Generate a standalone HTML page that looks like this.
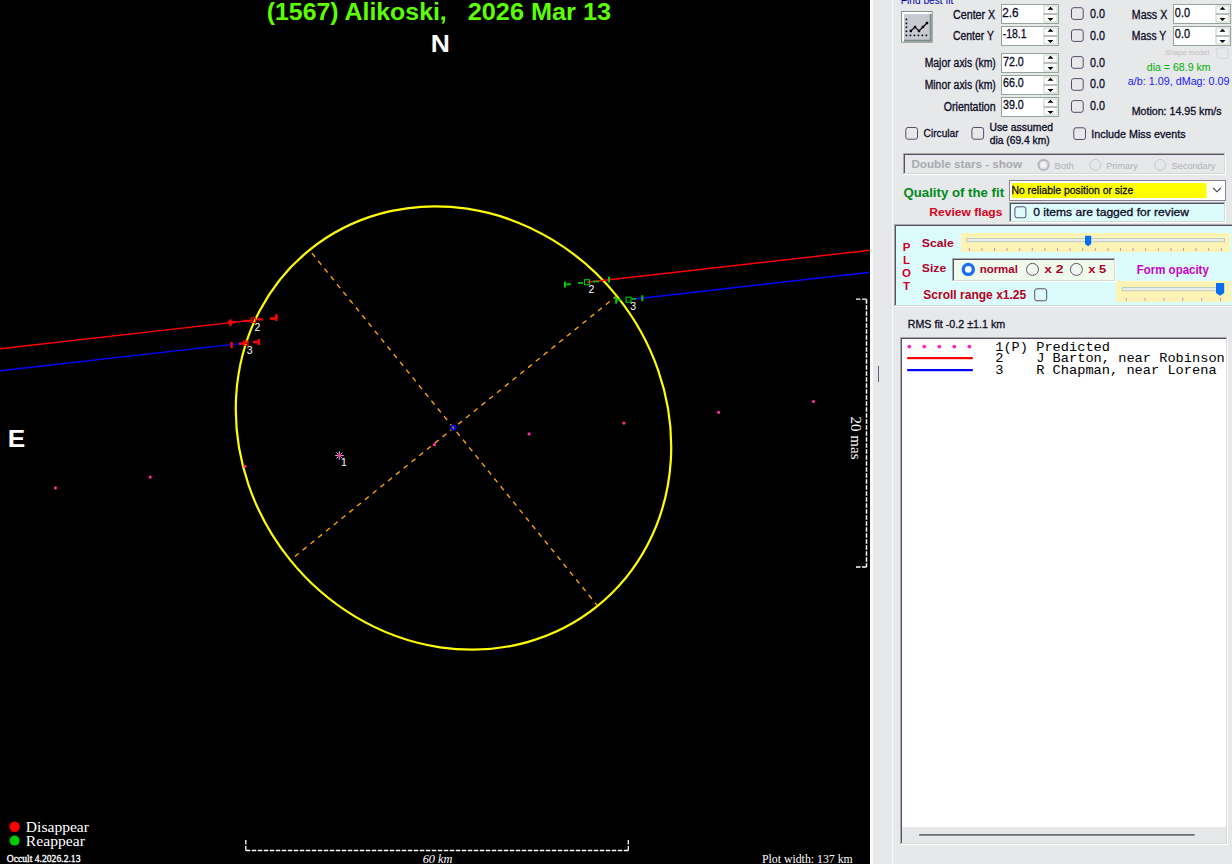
<!DOCTYPE html><html><head><meta charset="utf-8"><style>html,body{margin:0;padding:0;background:#000;overflow:hidden}svg{display:block}</style></head><body>
<svg width="1232" height="864" viewBox="0 0 1232 864">
<rect x="0" y="0" width="870" height="864" fill="#000"/>
<ellipse cx="453.5" cy="428" rx="229" ry="210" transform="rotate(51 453.5 428)" fill="none" stroke="#ffff00" stroke-width="2.2"/>
<line x1="309.6" y1="250.3" x2="597.4" y2="605.7" stroke="#ffa500" stroke-width="1.35" stroke-dasharray="5 5" stroke-dashoffset="6.4"/>
<line x1="291.1" y1="559.5" x2="615.9" y2="296.5" stroke="#ffa500" stroke-width="1.35" stroke-dasharray="5 5" stroke-dashoffset="5.1"/>
<circle cx="453.5" cy="427.5" r="2.2" fill="none" stroke="#0000ff" stroke-width="1.8"/>
<line x1="0" y1="348.80" x2="253" y2="320.14" stroke="#ff0000" stroke-width="1.45"/>
<line x1="587" y1="282.29" x2="870" y2="250.23" stroke="#ff0000" stroke-width="1.45"/>
<line x1="0" y1="370.80" x2="240" y2="343.63" stroke="#0000ff" stroke-width="1.45"/>
<line x1="239" y1="343.75" x2="247" y2="342.84" stroke="#ff0000" stroke-width="2.5"/>
<line x1="635" y1="298.92" x2="870" y2="272.32" stroke="#0000ff" stroke-width="1.45"/>
<rect x="229.2" y="319.4" width="2.5" height="6.5" fill="#ff0000"/>
<line x1="228" y1="322.20" x2="236" y2="322.20" stroke="#ff0000" stroke-width="2.2"/>
<line x1="243" y1="320.80" x2="251" y2="320.80" stroke="#ff0000" stroke-width="2"/>
<rect x="251.2" y="317.9" width="4.5" height="4.5" fill="none" stroke="#ff0000" stroke-width="1.1"/>
<line x1="257" y1="319.40" x2="263" y2="319.40" stroke="#ff0000" stroke-width="2.2"/>
<line x1="270" y1="318.50" x2="277" y2="318.50" stroke="#ff0000" stroke-width="2.5"/>
<rect x="275.1" y="314.1" width="2.5" height="6.8" fill="#ff0000"/>
<rect x="230.3" y="342.0" width="2.5" height="6" fill="#ff0000"/>
<rect x="243.6" y="340.9" width="4.5" height="4.5" fill="none" stroke="#ff0000" stroke-width="1.1"/>
<line x1="253" y1="342.00" x2="260" y2="342.00" stroke="#ff0000" stroke-width="2.5"/>
<rect x="257.6" y="339.0" width="2.5" height="6" fill="#ff0000"/>
<rect x="564.0" y="281.6" width="2" height="6" fill="#00cc00"/>
<line x1="565" y1="284.30" x2="571" y2="284.30" stroke="#00cc00" stroke-width="1.8"/>
<line x1="578" y1="283.00" x2="583" y2="283.00" stroke="#00cc00" stroke-width="1.8"/>
<rect x="584.6" y="279.7" width="5" height="5" fill="none" stroke="#00cc00" stroke-width="1.1"/>
<line x1="593" y1="281.50" x2="599" y2="281.50" stroke="#00cc00" stroke-width="1.6"/>
<rect x="608.0" y="276.7" width="2" height="5.8" fill="#00cc00"/>
<rect x="615.2" y="296.7" width="2" height="7" fill="#00cc00"/>
<line x1="616" y1="299.60" x2="621" y2="299.60" stroke="#00cc00" stroke-width="1.8"/>
<rect x="626.1" y="297.2" width="5" height="5" fill="none" stroke="#00cc00" stroke-width="1.1"/>
<line x1="632" y1="299.00" x2="636" y2="299.00" stroke="#00cc00" stroke-width="1.6"/>
<rect x="641.3" y="295.3" width="2" height="5.8" fill="#00cc00"/>
<text x="254.50" y="331" font-family="Liberation Sans" font-size="10.5" fill="#fff" font-weight="normal" font-style="normal" text-anchor="start"  xml:space="preserve">2</text>
<text x="246.80" y="353.6" font-family="Liberation Sans" font-size="10.5" fill="#fff" font-weight="normal" font-style="normal" text-anchor="start"  xml:space="preserve">3</text>
<text x="588.50" y="293" font-family="Liberation Sans" font-size="10.5" fill="#fff" font-weight="normal" font-style="normal" text-anchor="start"  xml:space="preserve">2</text>
<text x="630.30" y="309.6" font-family="Liberation Sans" font-size="10.5" fill="#fff" font-weight="normal" font-style="normal" text-anchor="start"  xml:space="preserve">3</text>
<text x="341.00" y="465.7" font-family="Liberation Sans" font-size="10.5" fill="#fff" font-weight="normal" font-style="normal" text-anchor="start"  xml:space="preserve">1</text>
<circle cx="55.4" cy="487.9" r="1.6" fill="#ff2a9a"/>
<circle cx="150.2" cy="477.1" r="1.6" fill="#ff2a9a"/>
<circle cx="244.9" cy="466.3" r="1.6" fill="#ff2a9a"/>
<circle cx="434.4" cy="444.7" r="1.6" fill="#ff2a9a"/>
<circle cx="529.1" cy="433.9" r="1.6" fill="#ff2a9a"/>
<circle cx="623.9" cy="423.1" r="1.6" fill="#ff2a9a"/>
<circle cx="718.6" cy="412.3" r="1.6" fill="#ff2a9a"/>
<circle cx="813.4" cy="401.5" r="1.6" fill="#ff2a9a"/>
<line x1="335.2" y1="455.5" x2="343.6" y2="455.5" stroke="#d8d8ff" stroke-width="0.9"/>
<line x1="336.4" y1="452.5" x2="342.4" y2="458.5" stroke="#d8d8ff" stroke-width="0.9"/>
<line x1="339.4" y1="451.3" x2="339.4" y2="459.7" stroke="#d8d8ff" stroke-width="0.9"/>
<line x1="342.4" y1="452.5" x2="336.4" y2="458.5" stroke="#d8d8ff" stroke-width="0.9"/>
<circle cx="339.4" cy="455.5" r="1.9" fill="#ff2a9a"/>
<text x="266.71" y="19.7" font-family="Liberation Sans" font-size="24" fill="#5cff00" font-weight="bold" font-style="normal" text-anchor="start" textLength="180.06" lengthAdjust="spacingAndGlyphs"  xml:space="preserve">(1567) Alikoski,</text>
<text x="467.71" y="19.7" font-family="Liberation Sans" font-size="24" fill="#5cff00" font-weight="bold" font-style="normal" text-anchor="start" textLength="143.40" lengthAdjust="spacingAndGlyphs"  xml:space="preserve">2026 Mar 13</text>
<text x="430.65" y="52" font-family="Liberation Sans" font-size="24" fill="#fff" font-weight="bold" font-style="normal" text-anchor="start" textLength="19.11" lengthAdjust="spacingAndGlyphs"  xml:space="preserve">N</text>
<text x="7.67" y="446.9" font-family="Liberation Sans" font-size="24" fill="#fff" font-weight="bold" font-style="normal" text-anchor="start" textLength="17.44" lengthAdjust="spacingAndGlyphs"  xml:space="preserve">E</text>
<circle cx="14.6" cy="826.8" r="5.2" fill="#ff0000"/>
<circle cx="14.6" cy="840.6" r="5.0" fill="#00cc00"/>
<text x="25.88" y="832" font-family="Liberation Serif" font-size="15" fill="#fff" font-weight="normal" font-style="normal" text-anchor="start" textLength="63.08" lengthAdjust="spacingAndGlyphs"  xml:space="preserve">Disappear</text>
<text x="25.88" y="845.8" font-family="Liberation Serif" font-size="15" fill="#fff" font-weight="normal" font-style="normal" text-anchor="start" textLength="59.07" lengthAdjust="spacingAndGlyphs"  xml:space="preserve">Reappear</text>
<text x="6.84" y="861.7" font-family="Liberation Serif" font-size="10.5" fill="#fff" font-weight="normal" font-style="normal" text-anchor="start" textLength="73.61" lengthAdjust="spacingAndGlyphs" stroke="#fff" stroke-width="0.35" xml:space="preserve">Occult 4.2026.2.13</text>
<path d="M245.8 850.5 H628.3" fill="none" stroke="#fff" stroke-width="1.5" stroke-dasharray="4.5 1.5"/>
<path d="M245.8 840 V850.5 M628.3 840 V850.5" fill="none" stroke="#fff" stroke-width="1.3" stroke-dasharray="4.5 1.5"/>
<text x="422.69" y="863.3" font-family="Liberation Serif" font-size="12" fill="#fff" font-weight="normal" font-style="italic" text-anchor="start" textLength="29.83" lengthAdjust="spacingAndGlyphs"  xml:space="preserve">60 km</text>
<text x="761.95" y="863.3" font-family="Liberation Serif" font-size="12" fill="#fff" font-weight="normal" font-style="normal" text-anchor="start" textLength="90.84" lengthAdjust="spacingAndGlyphs"  xml:space="preserve">Plot width: 137 km</text>
<path d="M866.5 299.2 V567" fill="none" stroke="#fff" stroke-width="1.5" stroke-dasharray="4.5 1.5"/>
<path d="M856 299.2 H866.5 M856 567 H866.5" fill="none" stroke="#fff" stroke-width="1.3" stroke-dasharray="4.5 1.5"/>
<g transform="translate(851 416.6) rotate(90)">
<text x="0.00" y="0" font-family="Liberation Serif" font-size="15" fill="#fff" font-weight="normal" font-style="normal" text-anchor="start"  xml:space="preserve">20 mas</text>
</g>
<rect x="870" y="0" width="362" height="864" fill="#e6e8ea"/>
<rect x="870" y="0" width="3" height="864" fill="#fafafa"/>
<rect x="892" y="0" width="1" height="864" fill="#f8f8f8"/>
<rect x="878" y="366" width="1" height="16" fill="#606070"/>
<text x="900.81" y="3.6" font-family="Liberation Sans" font-size="11.5" fill="#0000b0" font-weight="normal" font-style="normal" text-anchor="start" textLength="52.64" lengthAdjust="spacingAndGlyphs"  xml:space="preserve">Find best fit</text>
<rect x="901" y="11" width="31.7" height="31.7" fill="#8a948e"/>
<rect x="902" y="12" width="29.7" height="29.7" fill="#ffffff"/>
<rect x="904" y="14" width="27.7" height="27.7" fill="#7a8a82"/>
<rect x="904" y="14" width="25.7" height="25.7" fill="#c9c9d2"/>
<rect x="905.6" y="18.599999999999998" width="1.6" height="1.6" fill="#000"/>
<rect x="905.6" y="22.599999999999998" width="1.6" height="1.6" fill="#000"/>
<rect x="905.6" y="26.5" width="1.6" height="1.6" fill="#000"/>
<rect x="905.6" y="30.5" width="1.6" height="1.6" fill="#000"/>
<rect x="905.6" y="34.6" width="1.6" height="1.6" fill="#000"/>
<rect x="909.6" y="34.6" width="1.6" height="1.6" fill="#000"/>
<rect x="913.6" y="34.6" width="1.6" height="1.6" fill="#000"/>
<rect x="917.6" y="34.6" width="1.6" height="1.6" fill="#000"/>
<rect x="921.6" y="34.6" width="1.6" height="1.6" fill="#000"/>
<rect x="925.6" y="34.6" width="1.6" height="1.6" fill="#000"/>
<polyline points="910.8,31 915,27 919,31 923,27 927,23" fill="none" stroke="#000" stroke-width="1.1"/>
<rect x="909.5999999999999" y="29.8" width="2.4" height="2.4" fill="#000"/>
<rect x="913.8" y="25.8" width="2.4" height="2.4" fill="#000"/>
<rect x="917.8" y="29.8" width="2.4" height="2.4" fill="#000"/>
<rect x="921.8" y="25.8" width="2.4" height="2.4" fill="#000"/>
<rect x="925.8" y="21.8" width="2.4" height="2.4" fill="#000"/>
<rect x="1001.5" y="4.5" width="57" height="19" fill="#fff" stroke="#96a49a" stroke-width="1"/>
<rect x="1044.0" y="6.0" width="13" height="7.5" fill="#fdfdfd" stroke="#c6d2c6" stroke-width="1"/>
<rect x="1044.0" y="14.5" width="13" height="7.5" fill="#fdfdfd" stroke="#c6d2c6" stroke-width="1"/>
<rect x="1043.5" y="13.5" width="14" height="1" fill="#b0a8bc"/>
<path d="M1047.5 9.8 L1053.5 9.8 L1050.5 6.7 Z" fill="#000"/>
<path d="M1047.5 17.9 L1053.5 17.9 L1050.5 21.1 Z" fill="#000"/>
<text x="1002.21" y="17" font-family="Liberation Sans" font-size="12" fill="#0a0a24" font-weight="normal" font-style="normal" text-anchor="start" textLength="16.32" lengthAdjust="spacingAndGlyphs"  stroke="#0a0a24" stroke-width="0.3" xml:space="preserve">2.6</text>
<text x="953.05" y="18.6" font-family="Liberation Sans" font-size="12" fill="#0a0a24" font-weight="normal" font-style="normal" text-anchor="start" textLength="42.17" lengthAdjust="spacingAndGlyphs"  stroke="#0a0a24" stroke-width="0.3" xml:space="preserve">Center X</text>
<rect x="1071.5" y="7.7" width="11.7" height="11.7" rx="2.2" fill="none" stroke="#5a4a6a" stroke-width="1"/>
<text x="1089.95" y="17.9" font-family="Liberation Sans" font-size="12" fill="#0a0a24" font-weight="normal" font-style="normal" text-anchor="start" textLength="14.94" lengthAdjust="spacingAndGlyphs"  stroke="#0a0a24" stroke-width="0.3" xml:space="preserve">0.0</text>
<rect x="1001.5" y="26.5" width="57" height="19" fill="#fff" stroke="#96a49a" stroke-width="1"/>
<rect x="1044.0" y="28.0" width="13" height="7.5" fill="#fdfdfd" stroke="#c6d2c6" stroke-width="1"/>
<rect x="1044.0" y="36.5" width="13" height="7.5" fill="#fdfdfd" stroke="#c6d2c6" stroke-width="1"/>
<rect x="1043.5" y="35.5" width="14" height="1" fill="#b0a8bc"/>
<path d="M1047.5 31.8 L1053.5 31.8 L1050.5 28.7 Z" fill="#000"/>
<path d="M1047.5 39.9 L1053.5 39.9 L1050.5 43.1 Z" fill="#000"/>
<text x="1002.77" y="38" font-family="Liberation Sans" font-size="12" fill="#0a0a24" font-weight="normal" font-style="normal" text-anchor="start" textLength="23.66" lengthAdjust="spacingAndGlyphs"  stroke="#0a0a24" stroke-width="0.3" xml:space="preserve">-18.1</text>
<text x="953.07" y="40" font-family="Liberation Sans" font-size="12" fill="#0a0a24" font-weight="normal" font-style="normal" text-anchor="start" textLength="40.77" lengthAdjust="spacingAndGlyphs"  stroke="#0a0a24" stroke-width="0.3" xml:space="preserve">Center Y</text>
<rect x="1071.5" y="29.7" width="11.7" height="11.7" rx="2.2" fill="none" stroke="#5a4a6a" stroke-width="1"/>
<text x="1089.95" y="39.7" font-family="Liberation Sans" font-size="12" fill="#0a0a24" font-weight="normal" font-style="normal" text-anchor="start" textLength="14.94" lengthAdjust="spacingAndGlyphs"  stroke="#0a0a24" stroke-width="0.3" xml:space="preserve">0.0</text>
<rect x="1001.5" y="53.5" width="57" height="19" fill="#fff" stroke="#96a49a" stroke-width="1"/>
<rect x="1044.0" y="55.0" width="13" height="7.5" fill="#fdfdfd" stroke="#c6d2c6" stroke-width="1"/>
<rect x="1044.0" y="63.5" width="13" height="7.5" fill="#fdfdfd" stroke="#c6d2c6" stroke-width="1"/>
<rect x="1043.5" y="62.5" width="14" height="1" fill="#b0a8bc"/>
<path d="M1047.5 58.8 L1053.5 58.8 L1050.5 55.7 Z" fill="#000"/>
<path d="M1047.5 66.9 L1053.5 66.9 L1050.5 70.1 Z" fill="#000"/>
<text x="1003.06" y="65.7" font-family="Liberation Sans" font-size="12" fill="#0a0a24" font-weight="normal" font-style="normal" text-anchor="start" textLength="20.76" lengthAdjust="spacingAndGlyphs"  stroke="#0a0a24" stroke-width="0.3" xml:space="preserve">72.0</text>
<text x="924.63" y="67.1" font-family="Liberation Sans" font-size="12" fill="#0a0a24" font-weight="normal" font-style="normal" text-anchor="start" textLength="71.23" lengthAdjust="spacingAndGlyphs"  stroke="#0a0a24" stroke-width="0.3" xml:space="preserve">Major axis (km)</text>
<rect x="1071.5" y="56.6" width="11.7" height="11.7" rx="2.2" fill="none" stroke="#5a4a6a" stroke-width="1"/>
<text x="1089.95" y="66.6" font-family="Liberation Sans" font-size="12" fill="#0a0a24" font-weight="normal" font-style="normal" text-anchor="start" textLength="14.94" lengthAdjust="spacingAndGlyphs"  stroke="#0a0a24" stroke-width="0.3" xml:space="preserve">0.0</text>
<rect x="1001.5" y="75.5" width="57" height="19" fill="#fff" stroke="#96a49a" stroke-width="1"/>
<rect x="1044.0" y="77.0" width="13" height="7.5" fill="#fdfdfd" stroke="#c6d2c6" stroke-width="1"/>
<rect x="1044.0" y="85.5" width="13" height="7.5" fill="#fdfdfd" stroke="#c6d2c6" stroke-width="1"/>
<rect x="1043.5" y="84.5" width="14" height="1" fill="#b0a8bc"/>
<path d="M1047.5 80.8 L1053.5 80.8 L1050.5 77.7 Z" fill="#000"/>
<path d="M1047.5 88.9 L1053.5 88.9 L1050.5 92.1 Z" fill="#000"/>
<text x="1003.06" y="87.1" font-family="Liberation Sans" font-size="12" fill="#0a0a24" font-weight="normal" font-style="normal" text-anchor="start" textLength="20.76" lengthAdjust="spacingAndGlyphs"  stroke="#0a0a24" stroke-width="0.3" xml:space="preserve">66.0</text>
<text x="924.63" y="89.2" font-family="Liberation Sans" font-size="12" fill="#0a0a24" font-weight="normal" font-style="normal" text-anchor="start" textLength="71.23" lengthAdjust="spacingAndGlyphs"  stroke="#0a0a24" stroke-width="0.3" xml:space="preserve">Minor axis (km)</text>
<rect x="1071.5" y="78.6" width="11.7" height="11.7" rx="2.2" fill="none" stroke="#5a4a6a" stroke-width="1"/>
<text x="1089.95" y="88.3" font-family="Liberation Sans" font-size="12" fill="#0a0a24" font-weight="normal" font-style="normal" text-anchor="start" textLength="14.94" lengthAdjust="spacingAndGlyphs"  stroke="#0a0a24" stroke-width="0.3" xml:space="preserve">0.0</text>
<rect x="1001.5" y="97.5" width="57" height="19" fill="#fff" stroke="#96a49a" stroke-width="1"/>
<rect x="1044.0" y="99.0" width="13" height="7.5" fill="#fdfdfd" stroke="#c6d2c6" stroke-width="1"/>
<rect x="1044.0" y="107.5" width="13" height="7.5" fill="#fdfdfd" stroke="#c6d2c6" stroke-width="1"/>
<rect x="1043.5" y="106.5" width="14" height="1" fill="#b0a8bc"/>
<path d="M1047.5 102.8 L1053.5 102.8 L1050.5 99.7 Z" fill="#000"/>
<path d="M1047.5 110.9 L1053.5 110.9 L1050.5 114.1 Z" fill="#000"/>
<text x="1003.06" y="109.2" font-family="Liberation Sans" font-size="12" fill="#0a0a24" font-weight="normal" font-style="normal" text-anchor="start" textLength="20.76" lengthAdjust="spacingAndGlyphs"  stroke="#0a0a24" stroke-width="0.3" xml:space="preserve">39.0</text>
<text x="943.76" y="110.5" font-family="Liberation Sans" font-size="12" fill="#0a0a24" font-weight="normal" font-style="normal" text-anchor="start" textLength="51.86" lengthAdjust="spacingAndGlyphs"  stroke="#0a0a24" stroke-width="0.3" xml:space="preserve">Orientation</text>
<rect x="1071.5" y="100.6" width="11.7" height="11.7" rx="2.2" fill="none" stroke="#5a4a6a" stroke-width="1"/>
<text x="1089.95" y="110.3" font-family="Liberation Sans" font-size="12" fill="#0a0a24" font-weight="normal" font-style="normal" text-anchor="start" textLength="14.94" lengthAdjust="spacingAndGlyphs"  stroke="#0a0a24" stroke-width="0.3" xml:space="preserve">0.0</text>
<text x="1131.81" y="18.7" font-family="Liberation Sans" font-size="12" fill="#0a0a24" font-weight="normal" font-style="normal" text-anchor="start" textLength="35.42" lengthAdjust="spacingAndGlyphs"  stroke="#0a0a24" stroke-width="0.3" xml:space="preserve">Mass X</text>
<text x="1131.84" y="39.7" font-family="Liberation Sans" font-size="12" fill="#0a0a24" font-weight="normal" font-style="normal" text-anchor="start" textLength="34.42" lengthAdjust="spacingAndGlyphs"  stroke="#0a0a24" stroke-width="0.3" xml:space="preserve">Mass Y</text>
<rect x="1173.5" y="4.5" width="57" height="19" fill="#fff" stroke="#96a49a" stroke-width="1"/>
<rect x="1216.0" y="6.0" width="13" height="7.5" fill="#fdfdfd" stroke="#c6d2c6" stroke-width="1"/>
<rect x="1216.0" y="14.5" width="13" height="7.5" fill="#fdfdfd" stroke="#c6d2c6" stroke-width="1"/>
<rect x="1215.5" y="13.5" width="14" height="1" fill="#b0a8bc"/>
<path d="M1219.5 9.8 L1225.5 9.8 L1222.5 6.7 Z" fill="#000"/>
<path d="M1219.5 17.9 L1225.5 17.9 L1222.5 21.1 Z" fill="#000"/>
<text x="1174.85" y="16.6" font-family="Liberation Sans" font-size="12" fill="#0a0a24" font-weight="normal" font-style="normal" text-anchor="start" textLength="15.15" lengthAdjust="spacingAndGlyphs"  stroke="#0a0a24" stroke-width="0.3" xml:space="preserve">0.0</text>
<rect x="1173.5" y="26.5" width="57" height="19" fill="#fff" stroke="#96a49a" stroke-width="1"/>
<rect x="1216.0" y="28.0" width="13" height="7.5" fill="#fdfdfd" stroke="#c6d2c6" stroke-width="1"/>
<rect x="1216.0" y="36.5" width="13" height="7.5" fill="#fdfdfd" stroke="#c6d2c6" stroke-width="1"/>
<rect x="1215.5" y="35.5" width="14" height="1" fill="#b0a8bc"/>
<path d="M1219.5 31.8 L1225.5 31.8 L1222.5 28.7 Z" fill="#000"/>
<path d="M1219.5 39.9 L1225.5 39.9 L1222.5 43.1 Z" fill="#000"/>
<text x="1174.85" y="38.4" font-family="Liberation Sans" font-size="12" fill="#0a0a24" font-weight="normal" font-style="normal" text-anchor="start" textLength="15.15" lengthAdjust="spacingAndGlyphs"  stroke="#0a0a24" stroke-width="0.3" xml:space="preserve">0.0</text>
<text x="1164.93" y="54.8" font-family="Liberation Sans" font-size="8" fill="#c8bcbc" font-weight="normal" font-style="normal" text-anchor="start" textLength="44.15" lengthAdjust="spacingAndGlyphs"  xml:space="preserve">Shape model</text>
<rect x="1216.8" y="47.8" width="11.4" height="10.5" rx="2" fill="none" stroke="#d4d4dc" stroke-width="1"/>
<text x="1146.77" y="70.8" font-family="Liberation Sans" font-size="10" fill="#00b000" font-weight="normal" font-style="normal" text-anchor="start" textLength="63.82" lengthAdjust="spacingAndGlyphs"  xml:space="preserve">dia = 68.9 km</text>
<text x="1127.89" y="84.8" font-family="Liberation Sans" font-size="10.5" fill="#1a1aff" font-weight="normal" font-style="normal" text-anchor="start" textLength="101.62" lengthAdjust="spacingAndGlyphs"  xml:space="preserve">a/b: 1.09, dMag: 0.09</text>
<text x="1131.67" y="114.5" font-family="Liberation Sans" font-size="11.5" fill="#0a0a24" font-weight="normal" font-style="normal" text-anchor="start" textLength="89.90" lengthAdjust="spacingAndGlyphs"  stroke="#0a0a24" stroke-width="0.3" xml:space="preserve">Motion: 14.95 km/s</text>
<rect x="905.8" y="127.5" width="11.7" height="11.7" rx="2.2" fill="none" stroke="#5a4a6a" stroke-width="1"/>
<text x="923.56" y="137.3" font-family="Liberation Sans" font-size="11.5" fill="#0a0a24" font-weight="normal" font-style="normal" text-anchor="start" textLength="35.05" lengthAdjust="spacingAndGlyphs"  stroke="#0a0a24" stroke-width="0.3" xml:space="preserve">Circular</text>
<rect x="971.9" y="127.5" width="11.7" height="11.7" rx="2.2" fill="none" stroke="#5a4a6a" stroke-width="1"/>
<text x="989.42" y="130.7" font-family="Liberation Sans" font-size="10" fill="#0a0a24" font-weight="normal" font-style="normal" text-anchor="start" textLength="63.55" lengthAdjust="spacingAndGlyphs"  stroke="#0a0a24" stroke-width="0.3" xml:space="preserve">Use assumed</text>
<text x="989.69" y="143.5" font-family="Liberation Sans" font-size="10" fill="#0a0a24" font-weight="normal" font-style="normal" text-anchor="start" textLength="59.94" lengthAdjust="spacingAndGlyphs"  stroke="#0a0a24" stroke-width="0.3" xml:space="preserve">dia (69.4 km)</text>
<rect x="1073.8" y="127.8" width="11.7" height="11.7" rx="2.2" fill="none" stroke="#5a4a6a" stroke-width="1"/>
<text x="1091.37" y="137.8" font-family="Liberation Sans" font-size="11.5" fill="#0a0a24" font-weight="normal" font-style="normal" text-anchor="start" textLength="94.30" lengthAdjust="spacingAndGlyphs"  stroke="#0a0a24" stroke-width="0.3" xml:space="preserve">Include Miss events</text>
<rect x="905" y="155" width="319" height="18" fill="#e6e8ea"/>
<rect x="903" y="153" width="322" height="1" fill="#a4b0a4"/>
<rect x="903" y="153" width="1" height="21" fill="#a4b0a4"/>
<rect x="904" y="154" width="320" height="1" fill="#5c4a6c"/>
<rect x="904" y="154" width="1" height="19" fill="#5c4a6c"/>
<rect x="904" y="173" width="321" height="1" fill="#d2dad2"/>
<rect x="1224" y="154" width="1" height="20" fill="#d2dad2"/>
<rect x="903" y="174" width="323" height="1" fill="#ffffff"/>
<rect x="1225" y="153" width="1" height="22" fill="#ffffff"/>
<text x="911.41" y="167.7" font-family="Liberation Sans" font-size="11" fill="#a8a8b0" font-weight="bold" font-style="normal" text-anchor="start" textLength="110.63" lengthAdjust="spacingAndGlyphs"  xml:space="preserve">Double stars - show</text>
<circle cx="1043.6" cy="164.9" r="5" fill="none" stroke="#b8b8c4" stroke-width="2.2"/>
<circle cx="1043.6" cy="164.9" r="2.2" fill="#f4f4f8"/>
<text x="1054.56" y="168.8" font-family="Liberation Sans" font-size="9.5" fill="#b0b0b8" font-weight="normal" font-style="normal" text-anchor="start" textLength="19.28" lengthAdjust="spacingAndGlyphs"  xml:space="preserve">Both</text>
<circle cx="1095.3" cy="164.9" r="5.4" fill="none" stroke="#c8c8d0" stroke-width="1"/>
<text x="1106.17" y="168.8" font-family="Liberation Sans" font-size="9.5" fill="#b0b0b8" font-weight="normal" font-style="normal" text-anchor="start" textLength="31.71" lengthAdjust="spacingAndGlyphs"  xml:space="preserve">Primary</text>
<circle cx="1160.2" cy="164.9" r="5.4" fill="none" stroke="#c8c8d0" stroke-width="1"/>
<text x="1171.82" y="168.8" font-family="Liberation Sans" font-size="9.5" fill="#b0b0b8" font-weight="normal" font-style="normal" text-anchor="start" textLength="43.40" lengthAdjust="spacingAndGlyphs"  xml:space="preserve">Secondary</text>
<text x="903.45" y="196.5" font-family="Liberation Sans" font-size="12" fill="#008a1a" font-weight="bold" font-style="normal" text-anchor="start" textLength="100.65" lengthAdjust="spacingAndGlyphs"  xml:space="preserve">Quality of the fit</text>
<rect x="1009.5" y="180.5" width="216" height="20" fill="#fff" stroke="#8c8098" stroke-width="1"/>
<rect x="1012" y="183" width="194.5" height="15" fill="#ffff00"/>
<path d="M1213.2 188 L1217 191.8 L1220.8 188" fill="none" stroke="#404048" stroke-width="1.1"/>
<text x="1011.40" y="193.7" font-family="Liberation Sans" font-size="11.5" fill="#0a0a24" font-weight="normal" font-style="normal" text-anchor="start" textLength="121.94" lengthAdjust="spacingAndGlyphs"  stroke="#0a0a24" stroke-width="0.3" xml:space="preserve">No reliable position or size</text>
<rect x="1011" y="204" width="213" height="17" fill="#dcfcfc"/>
<rect x="1009" y="202" width="216" height="1" fill="#a4b0a4"/>
<rect x="1009" y="202" width="1" height="20" fill="#a4b0a4"/>
<rect x="1010" y="203" width="214" height="1" fill="#5c4a6c"/>
<rect x="1010" y="203" width="1" height="18" fill="#5c4a6c"/>
<rect x="1010" y="221" width="215" height="1" fill="#d2dad2"/>
<rect x="1224" y="203" width="1" height="19" fill="#d2dad2"/>
<rect x="1009" y="222" width="217" height="1" fill="#ffffff"/>
<rect x="1225" y="202" width="1" height="21" fill="#ffffff"/>
<text x="929.38" y="216.2" font-family="Liberation Sans" font-size="11" fill="#d8001a" font-weight="bold" font-style="normal" text-anchor="start" textLength="73.05" lengthAdjust="spacingAndGlyphs"  xml:space="preserve">Review flags</text>
<rect x="1014.9" y="206.8" width="11" height="11" rx="2.2" fill="none" stroke="#5a4a6a" stroke-width="1"/>
<text x="1033.17" y="216.2" font-family="Liberation Sans" font-size="11.5" fill="#0a0a24" font-weight="normal" font-style="normal" text-anchor="start" textLength="155.87" lengthAdjust="spacingAndGlyphs"  stroke="#0a0a24" stroke-width="0.3" xml:space="preserve">0 items are tagged for review</text>
<rect x="896" y="226" width="337" height="79" fill="#dcfcfc"/>
<rect x="894" y="224" width="340" height="1" fill="#a4b0a4"/>
<rect x="894" y="224" width="1" height="82" fill="#a4b0a4"/>
<rect x="895" y="225" width="338" height="1" fill="#5c4a6c"/>
<rect x="895" y="225" width="1" height="80" fill="#5c4a6c"/>
<rect x="895" y="305" width="339" height="1" fill="#d2dad2"/>
<rect x="1233" y="225" width="1" height="81" fill="#d2dad2"/>
<rect x="894" y="306" width="341" height="1" fill="#ffffff"/>
<rect x="1234" y="224" width="1" height="83" fill="#ffffff"/>
<text x="906.60" y="251" font-family="Liberation Sans" font-size="11.5" fill="#d0002a" font-weight="bold" font-style="normal" text-anchor="middle"  xml:space="preserve">P</text>
<text x="906.60" y="263.5" font-family="Liberation Sans" font-size="11.5" fill="#d0002a" font-weight="bold" font-style="normal" text-anchor="middle"  xml:space="preserve">L</text>
<text x="906.60" y="276.6" font-family="Liberation Sans" font-size="11.5" fill="#d0002a" font-weight="bold" font-style="normal" text-anchor="middle"  xml:space="preserve">O</text>
<text x="906.60" y="289.7" font-family="Liberation Sans" font-size="11.5" fill="#d0002a" font-weight="bold" font-style="normal" text-anchor="middle"  xml:space="preserve">T</text>
<text x="921.87" y="246.5" font-family="Liberation Sans" font-size="11.5" fill="#b0002a" font-weight="bold" font-style="normal" text-anchor="start" textLength="31.96" lengthAdjust="spacingAndGlyphs"  xml:space="preserve">Scale</text>
<text x="921.87" y="272.4" font-family="Liberation Sans" font-size="11.5" fill="#b0002a" font-weight="bold" font-style="normal" text-anchor="start" textLength="24.31" lengthAdjust="spacingAndGlyphs"  xml:space="preserve">Size</text>
<text x="923.30" y="298.7" font-family="Liberation Sans" font-size="12" fill="#b80020" font-weight="bold" font-style="normal" text-anchor="start" textLength="102.94" lengthAdjust="spacingAndGlyphs"  xml:space="preserve">Scroll range x1.25</text>
<rect x="961" y="233" width="269" height="19" fill="#fdf3b4"/>
<rect x="966.5" y="238.5" width="258" height="3.2" fill="#e8ecea" stroke="#c0ccc0" stroke-width="1"/>
<rect x="968.8" y="248" width="1" height="2.8" fill="#c888e0"/>
<rect x="981.4" y="248" width="1" height="2.8" fill="#c888e0"/>
<rect x="994.0" y="248" width="1" height="2.8" fill="#c888e0"/>
<rect x="1006.6" y="248" width="1" height="2.8" fill="#c888e0"/>
<rect x="1019.2" y="248" width="1" height="2.8" fill="#c888e0"/>
<rect x="1031.8" y="248" width="1" height="2.8" fill="#c888e0"/>
<rect x="1044.4" y="248" width="1" height="2.8" fill="#c888e0"/>
<rect x="1057.0" y="248" width="1" height="2.8" fill="#c888e0"/>
<rect x="1069.6" y="248" width="1" height="2.8" fill="#c888e0"/>
<rect x="1082.2" y="248" width="1" height="2.8" fill="#c888e0"/>
<rect x="1094.8" y="248" width="1" height="2.8" fill="#c888e0"/>
<rect x="1107.4" y="248" width="1" height="2.8" fill="#c888e0"/>
<rect x="1120.0" y="248" width="1" height="2.8" fill="#c888e0"/>
<rect x="1132.6" y="248" width="1" height="2.8" fill="#c888e0"/>
<rect x="1145.2" y="248" width="1" height="2.8" fill="#c888e0"/>
<rect x="1157.8" y="248" width="1" height="2.8" fill="#c888e0"/>
<rect x="1170.4" y="248" width="1" height="2.8" fill="#c888e0"/>
<rect x="1183.0" y="248" width="1" height="2.8" fill="#c888e0"/>
<rect x="1195.6" y="248" width="1" height="2.8" fill="#c888e0"/>
<rect x="1208.2" y="248" width="1" height="2.8" fill="#c888e0"/>
<rect x="1220.8" y="248" width="1" height="2.8" fill="#c888e0"/>
<path d="M1085 235.8 H1091.2 V244 L1088.1 246.2 L1085 244 Z" fill="#0a6ef0"/>
<rect x="954" y="260" width="160" height="20" fill="#effcec"/>
<rect x="952" y="258" width="163" height="1" fill="#a4b0a4"/>
<rect x="952" y="258" width="1" height="23" fill="#a4b0a4"/>
<rect x="953" y="259" width="161" height="1" fill="#5c4a6c"/>
<rect x="953" y="259" width="1" height="21" fill="#5c4a6c"/>
<rect x="953" y="280" width="162" height="1" fill="#d2dad2"/>
<rect x="1114" y="259" width="1" height="22" fill="#d2dad2"/>
<rect x="952" y="281" width="164" height="1" fill="#ffffff"/>
<rect x="1115" y="258" width="1" height="24" fill="#ffffff"/>
<circle cx="968.3" cy="269.4" r="5" fill="#fff" stroke="#1a6ef0" stroke-width="3.4"/>
<circle cx="968.3" cy="269.4" r="1.8" fill="#fff"/>
<text x="979.65" y="273.1" font-family="Liberation Sans" font-size="11.5" fill="#b0002a" font-weight="bold" font-style="normal" text-anchor="start" textLength="38.19" lengthAdjust="spacingAndGlyphs"  xml:space="preserve">normal</text>
<circle cx="1032.5" cy="269.4" r="6" fill="#f2f6f0" stroke="#5c5668" stroke-width="1"/>
<text x="1044.20" y="273.1" font-family="Liberation Sans" font-size="11.5" fill="#b0002a" font-weight="bold" font-style="normal" text-anchor="start" textLength="19.20" lengthAdjust="spacingAndGlyphs"  xml:space="preserve">x 2</text>
<circle cx="1076.4" cy="269.4" r="6" fill="#f2f6f0" stroke="#5c5668" stroke-width="1"/>
<text x="1088.32" y="273.1" font-family="Liberation Sans" font-size="11.5" fill="#b0002a" font-weight="bold" font-style="normal" text-anchor="start" textLength="17.96" lengthAdjust="spacingAndGlyphs"  xml:space="preserve">x 5</text>
<text x="1136.78" y="273.7" font-family="Liberation Sans" font-size="12" fill="#c800c8" font-weight="bold" font-style="normal" text-anchor="start" textLength="72.02" lengthAdjust="spacingAndGlyphs"  xml:space="preserve">Form opacity</text>
<rect x="1034.7" y="288.8" width="12" height="12" rx="2.2" fill="none" stroke="#5a4a6a" stroke-width="1"/>
<rect x="1116" y="281" width="115" height="20.8" fill="#fdf3b4"/>
<rect x="1122.5" y="287.5" width="101" height="3.2" fill="#e8ecea" stroke="#c0ccc0" stroke-width="1"/>
<rect x="1125.8" y="297.9" width="1" height="2.9" fill="#c888e0"/>
<rect x="1144.6" y="297.9" width="1" height="2.9" fill="#c888e0"/>
<rect x="1163.5" y="297.9" width="1" height="2.9" fill="#c888e0"/>
<rect x="1182.3" y="297.9" width="1" height="2.9" fill="#c888e0"/>
<rect x="1201.2" y="297.9" width="1" height="2.9" fill="#c888e0"/>
<rect x="1220.0" y="297.9" width="1" height="2.9" fill="#c888e0"/>
<path d="M1216 283 H1224.2 V293 L1220.1 295.8 L1216 293 Z" fill="#0a6ef0"/>
<text x="907.67" y="327.6" font-family="Liberation Sans" font-size="11.5" fill="#0a0a24" font-weight="normal" font-style="normal" text-anchor="start" textLength="97.51" lengthAdjust="spacingAndGlyphs"  stroke="#0a0a24" stroke-width="0.3" xml:space="preserve">RMS fit -0.2 ±1.1 km</text>
<rect x="902" y="339" width="324" height="504" fill="#fff"/>
<rect x="900" y="337" width="327" height="1" fill="#a4b0a4"/>
<rect x="900" y="337" width="1" height="507" fill="#a4b0a4"/>
<rect x="901" y="338" width="325" height="1" fill="#5c4a6c"/>
<rect x="901" y="338" width="1" height="505" fill="#5c4a6c"/>
<rect x="901" y="843" width="326" height="1" fill="#d2dad2"/>
<rect x="1226" y="338" width="1" height="506" fill="#d2dad2"/>
<rect x="900" y="844" width="328" height="1" fill="#ffffff"/>
<rect x="1227" y="337" width="1" height="508" fill="#ffffff"/>
<rect x="902" y="827" width="324" height="16" fill="#e6e8ea"/>
<rect x="919.2" y="834" width="275.4" height="1.8" fill="#68707a"/>
<circle cx="909.3" cy="346.6" r="1.9" fill="#ff20c0"/>
<circle cx="924.3" cy="346.6" r="1.9" fill="#ff20c0"/>
<circle cx="939.3" cy="346.6" r="1.9" fill="#ff20c0"/>
<circle cx="954.3" cy="346.6" r="1.9" fill="#ff20c0"/>
<circle cx="969.3" cy="346.6" r="1.9" fill="#ff20c0"/>
<rect x="907.2" y="357" width="65.6" height="2.2" fill="#ff0000"/>
<rect x="907.2" y="369" width="65.6" height="2.2" fill="#0000ff"/>
<text transform="translate(995.2 350.6) scale(1.12 1)" x="3.66 10.98 18.30 25.62 40.27 47.59 54.91 62.23 69.55 76.87 84.20 91.52 98.84" y="0" font-family="Liberation Mono" font-size="12.2" font-weight="normal" fill="#000" text-anchor="middle">1(P)Predicted</text>
<text transform="translate(995.2 362.3) scale(1.12 1)" x="3.66 40.27 54.91 62.23 69.55 76.87 84.20 91.52 98.84 113.48 120.80 128.12 135.45 150.09 157.41 164.73 172.05 179.37 186.70 194.02 201.34" y="0" font-family="Liberation Mono" font-size="12.2" font-weight="normal" fill="#000" text-anchor="middle">2JBarton,nearRobinson</text>
<text transform="translate(995.2 374.4) scale(1.12 1)" x="3.66 40.27 54.91 62.23 69.55 76.87 84.20 91.52 98.84 106.16 120.80 128.12 135.45 142.77 157.41 164.73 172.05 179.37 186.70 194.02" y="0" font-family="Liberation Mono" font-size="12.2" font-weight="normal" fill="#000" text-anchor="middle">3RChapman,nearLorena</text>
</svg></body></html>
